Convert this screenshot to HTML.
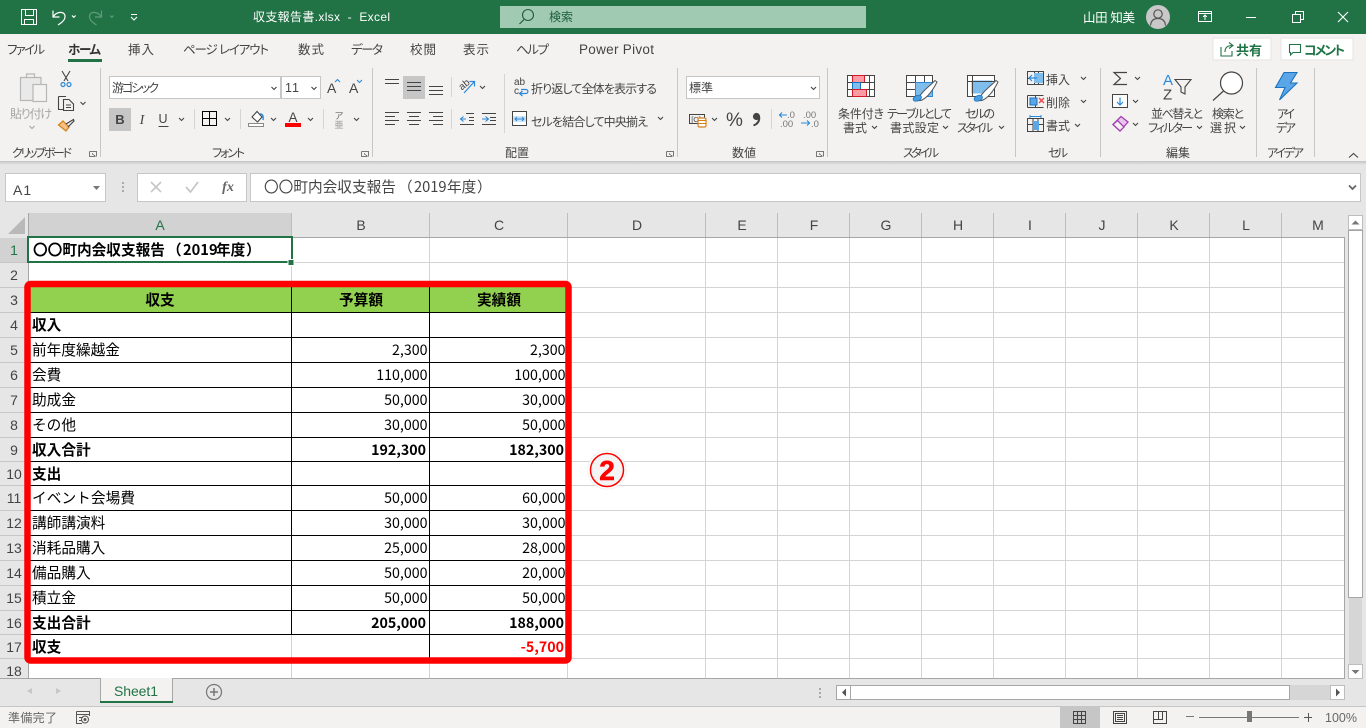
<!DOCTYPE html>
<html lang="ja">
<head>
<meta charset="utf-8">
<title>収支報告書.xlsx - Excel</title>
<style>
html,body{margin:0;padding:0;width:1366px;height:728px;overflow:hidden;background:#e6e6e6}
svg{display:block;position:absolute;left:0;top:0}
text{font-family:"Liberation Sans","Noto Sans CJK JP",sans-serif;white-space:pre;font-feature-settings:"palt"}
.r text{font-size:12px;fill:#444}
.c text{font-family:"Noto Sans CJK JP","Liberation Sans",sans-serif;font-size:14.67px;fill:#000;font-feature-settings:normal}
.c .b{font-weight:700}
.n{font-size:14.2px !important;text-anchor:end}
.h text{font-size:14px;fill:#444;text-anchor:middle}
.cr{shape-rendering:crispEdges}
</style>
</head>
<body>
<svg width="1366" height="728" viewBox="0 0 1366 728" xmlns="http://www.w3.org/2000/svg">
<defs>
<linearGradient id="sh" x1="0" y1="0" x2="0" y2="1"><stop offset="0" stop-color="#c4c4c4"/><stop offset="1" stop-color="#e6e6e6"/></linearGradient>
</defs>

<!-- base regions -->
<rect width="1366" height="728" fill="#e6e6e6"/>
<rect width="1366" height="34" fill="#217346"/>
<rect y="34" width="1366" height="127" fill="#f3f2f1"/>
<rect y="161" width="1366" height="4" fill="url(#sh)"/>

<!-- title bar -->
<g fill="none" stroke="#fff" stroke-width="1.2">
<path class="cr" d="M21.5 9.5H36.5V24.5H21.5ZM25.5 9.5V15.5H33.5V9.5M24.5 24.5V19.5H33.5V24.5"/>
<path d="M53 10.5V17H59.5M53.5 16.5C56 11.5 65 10.5 65 16.5C65 20.5 61 23 58 25"/>
<path d="M72 15.5l1.8 1.8l1.8-1.8"/>
<path d="M131 14.5h6M131 17l3 3l3-3" stroke-width="1.1"/>
</g>
<g fill="none" stroke="#5f9a7c" stroke-width="1.2">
<path d="M101.5 10.5V17H95M101 16.5C98.5 11.5 89.5 10.5 89.5 16.5C89.5 20.5 93.5 23 96.5 25"/>
<path d="M110 15.5l1.8 1.8l1.8-1.8"/>
</g>
<text x="253" y="21" font-size="12" fill="#fff" textLength="137">収支報告書.xlsx  -  Excel</text>
<rect x="500" y="6" width="366" height="22" fill="#a0cbb2"/>
<circle cx="528" cy="15" r="5.5" fill="none" stroke="#1f5c3c" stroke-width="1.1"/>
<path d="M524 19.5L519.5 24" stroke="#1f5c3c" stroke-width="1.2"/>
<text x="549" y="21" font-size="12" fill="#1f5c3c" textLength="24">検索</text>
<text x="1083" y="22" font-size="12.5" fill="#fff" textLength="52">山田 知美</text>
<circle cx="1158" cy="17" r="12" fill="#c8c8c8"/>
<circle cx="1158" cy="14" r="4.2" fill="none" stroke="#555" stroke-width="1.2"/>
<path d="M1150.5 25.5C1151 20 1154 18.5 1158 18.5C1162 18.5 1165 20 1165.5 25.5" fill="none" stroke="#555" stroke-width="1.2"/>
<g fill="none" stroke="#fff" stroke-width="1" class="cr">
<path d="M1198.5 11.5H1211.5V21.5H1198.5ZM1198.5 13.5H1211.5M1205 20V15M1203 17L1205 15L1207 17"/>
<path d="M1246 17.5H1256"/>
<path d="M1292.5 14.5H1300.5V22.5H1292.5ZM1295.5 14.5V11.5H1303.5V19.5H1300.5"/>
</g>
<path d="M1338 12L1348 22M1348 12L1338 22" stroke="#fff" stroke-width="1.1" fill="none"/>

<!-- tabs -->
<g font-size="12.5" fill="#444">
<text x="7" y="54" textLength="38">ファイル</text>
<text x="68" y="54" textLength="33" font-weight="700" style="fill:#333">ホーム</text>
<text x="128" y="54" textLength="26">挿入</text>
<text x="183" y="54" textLength="86">ページ レイアウト</text>
<text x="298" y="54" textLength="26">数式</text>
<text x="351" y="54" textLength="32">データ</text>
<text x="410" y="54" textLength="26">校閲</text>
<text x="463" y="54" textLength="26">表示</text>
<text x="516" y="54" textLength="33">ヘルプ</text>
<text x="579" y="54" font-size="13.5" textLength="75">Power Pivot</text>
</g>
<rect x="68" y="59" width="34" height="3" fill="#217346"/>

<!-- share/comment -->
<rect x="1213" y="38" width="58" height="22" fill="#fff" stroke="#e4e3e2"/>
<rect x="1281" y="38" width="72" height="22" fill="#fff" stroke="#e4e3e2"/>
<path d="M1221 47V56H1232V51M1225 52C1225 47 1228 45.5 1232 45.5M1229 42.5L1233 45.5L1229 48.5" fill="none" stroke="#217346" stroke-width="1.1"/>
<path d="M1289.5 44.5H1300.5V52.5H1293L1290.5 55V52.5H1289.5Z" fill="none" stroke="#217346" stroke-width="1.1"/>
<text x="1236" y="55" font-size="13" font-weight="700" fill="#217346" textLength="26">共有</text>
<text x="1304" y="55" font-size="13" font-weight="700" fill="#217346" textLength="41">コメント</text>

<!-- ribbon separators -->
<path class="cr" d="M100.5 68V157M372.5 68V157M677.5 68V157M827.5 68V157M1015.5 68V157M1100.5 68V157M1256.5 68V157M1314.5 68V157" stroke="#c6c6c6"/>
<path class="cr" d="M451.5 77V97M451.5 109V129M504.5 74V133M194.5 109V129M240.5 109V129M323.5 109V129M771.5 109V129" stroke="#d4d4d4"/>

<!-- group labels & ribbon text -->
<g class="r">
<text x="12" y="157" textLength="60">クリップボード</text>
<text x="212" y="157" textLength="33">フォント</text>
<text x="505" y="157" textLength="24">配置</text>
<text x="732" y="157" textLength="24">数値</text>
<text x="903" y="157" textLength="36">スタイル</text>
<text x="1048" y="157" textLength="20">セル</text>
<text x="1166" y="157" textLength="24">編集</text>
<text x="1267" y="157" textLength="37">アイデア</text>

<text x="10" y="118" textLength="42" style="fill:#a6a6a6">貼り付け</text>
<text x="531" y="93" textLength="126">折り返して全体を表示する</text>
<text x="531" y="126" textLength="117">セルを結合して中央揃え</text>
<text x="838" y="118" textLength="46">条件付き</text>
<text x="843" y="132" textLength="24">書式</text>
<text x="887" y="118" textLength="65">テーブルとして</text>
<text x="890" y="132" textLength="49">書式設定</text>
<text x="965" y="118" textLength="30">セルの</text>
<text x="957" y="132" textLength="36">スタイル</text>
<text x="1046" y="84" textLength="24">挿入</text>
<text x="1046" y="107" textLength="24">削除</text>
<text x="1046" y="130" textLength="24">書式</text>
<text x="1151" y="118" textLength="52">並べ替えと</text>
<text x="1148" y="132" textLength="45">フィルター</text>
<text x="1212" y="118" textLength="32">検索と</text>
<text x="1210" y="132" textLength="26">選択</text>
<text x="1277" y="118" textLength="18">アイ</text>
<text x="1276" y="132" textLength="20">デア</text>
</g>

<!-- chevrons -->
<path fill="none" stroke="#444" stroke-width="1.1" d="M80.5 102l2.5 2.5l2.5-2.5M179 118l2.5 2.5l2.5-2.5M225 118l2.5 2.5l2.5-2.5M271 118l2.5 2.5l2.5-2.5M308 118l2.5 2.5l2.5-2.5M354 118l2.5 2.5l2.5-2.5M480 86l2.5 2.5l2.5-2.5M658 117l2.5 2.5l2.5-2.5M712 118l2.5 2.5l2.5-2.5M872 126l2.5 2.5l2.5-2.5M943 126l2.5 2.5l2.5-2.5M999 126l2.5 2.5l2.5-2.5M1081 77l2.5 2.5l2.5-2.5M1081 100l2.5 2.5l2.5-2.5M1075 124l2.5 2.5l2.5-2.5M1135 77l2.5 2.5l2.5-2.5M1133 100l2.5 2.5l2.5-2.5M1133 123l2.5 2.5l2.5-2.5M1197 126l2.5 2.5l2.5-2.5M1240 126l2.5 2.5l2.5-2.5"/>
<path fill="none" stroke="#a6a6a6" stroke-width="1.1" d="M29.5 126l2.5 2.5l2.5-2.5"/>

<!-- dialog launchers -->
<g fill="none" stroke="#777" stroke-width="1" class="cr">
<path d="M89.5 151.5H96.5V156.5M89.5 151.5V156.5H95M92 153.5L95.5 156.5"/>
<path d="M361.5 151.5H368.5V156.5M361.5 151.5V156.5H367M364 153.5L367.5 156.5"/>
<path d="M666.5 151.5H673.5V156.5M666.5 151.5V156.5H672M669 153.5L672.5 156.5"/>
<path d="M816.5 151.5H823.5V156.5M816.5 151.5V156.5H822M819 153.5L822.5 156.5"/>
</g>
<path d="M1349 157.5l4.5-4l4.5 4" fill="none" stroke="#444" stroke-width="1.1"/>

<!-- clipboard icons -->
<g fill="#e9e9e9" stroke="#b6b6b6" stroke-width="1.2">
<path d="M20.5 77.5H41V100.5H20.5Z"/>
<path d="M26.5 77V74H34.5V77" fill="none"/>
<rect x="33" y="84.5" width="13.5" height="17" fill="#f3f2f1"/>
</g>
<g fill="none" stroke="#444" stroke-width="1.1">
<path d="M62 71L68 81M70 71L64 81"/>
<path d="M58.5 96.5H66M58.5 96.5V109.5H63"/>
<path d="M63.5 99.5H69L73.5 104V110.5H63.5ZM66 105H71M66 107.5H71"/>
</g>
<circle cx="63" cy="84.5" r="2" fill="none" stroke="#2b88d8" stroke-width="1.2"/>
<circle cx="69" cy="84.5" r="2" fill="none" stroke="#2b88d8" stroke-width="1.2"/>
<path d="M58.5 125L66 131L69 127L63 121Z" fill="#f6c180" stroke="#d67f19" stroke-width="1.2"/>
<path d="M66 124L73.5 119.5L74 121L68 127" fill="none" stroke="#444" stroke-width="1.2"/>

<!-- font group -->
<rect class="cr" x="109.5" y="76.5" width="171" height="22" fill="#fff" stroke="#c6c6c6"/>
<rect class="cr" x="281.5" y="76.5" width="39" height="22" fill="#fff" stroke="#c6c6c6"/>
<text x="112" y="92" font-size="12" fill="#444" textLength="47">游ゴシック</text>
<text x="285" y="92" font-size="12.5" fill="#444" textLength="14">11</text>
<path fill="none" stroke="#444" stroke-width="1.1" d="M271.5 87l2.5 2.5l2.5-2.5M311.5 87l2.5 2.5l2.5-2.5"/>
<text x="327" y="93" font-size="14" fill="#444">A</text>
<text x="349" y="93" font-size="14" fill="#444">A</text>
<path d="M335 82l2.5-2.5l2.5 2.5" fill="none" stroke="#2b88d8" stroke-width="1.1"/>
<path d="M357 80l2.5 2.5l2.5-2.5" fill="none" stroke="#2b88d8" stroke-width="1.1"/>
<rect x="109" y="108" width="22" height="23" fill="#c6c6c6"/>
<text x="120" y="124" font-size="13" font-weight="700" fill="#444" text-anchor="middle">B</text>
<text x="142" y="124" font-size="14" font-style="italic" fill="#444" text-anchor="middle" style="font-family:'Liberation Serif',serif">I</text>
<text x="163" y="123" font-size="12.5" fill="#444" text-anchor="middle">U</text>
<path class="cr" d="M158.5 126.5H168.5" stroke="#444"/>
<path class="cr" d="M202.5 111.5H216.5V125.5H202.5ZM209.5 111.5V125.5M202.5 118.5H216.5" fill="none" stroke="#000"/>
<path d="M252 117L257 111.5L262 117L257.5 122Z" fill="#fff" stroke="#444" stroke-width="1.1"/>
<path d="M260 114C263 114 263.5 116 263 120" fill="none" stroke="#2b88d8" stroke-width="1.4"/>
<rect class="cr" x="248.5" y="123.5" width="15" height="3" fill="#fff" stroke="#888"/>
<text x="293" y="122" font-size="13.5" fill="#444" text-anchor="middle">A</text>
<rect x="285" y="123" width="16" height="4" fill="#f00"/>
<text x="339" y="119" font-size="9" fill="#666" text-anchor="middle">ア</text>
<text x="339" y="128" font-size="9" fill="#999" text-anchor="middle">亜</text>

<!-- alignment -->
<rect x="403" y="76" width="22" height="23" fill="#c6c6c6"/>
<path class="cr" fill="none" stroke="#444" d="M385 79.5H399M385 83.5H399M407 82.5H421M407 86.5H421M407 90.5H421M429 86.5H443M429 90.5H443M429 94.5H443
M385 112.5H399M385 116.5H395M385 120.5H399M385 124.5H395M407 112.5H421M409 116.5H419M407 120.5H421M409 124.5H419M429 112.5H443M433 116.5H443M429 120.5H443M433 124.5H443"/>
<text x="461" y="88" font-size="10" fill="#444" transform="rotate(-40 465 88)">ab</text>
<path d="M464 93L474 82M469.5 81.5H474.5V86.5" fill="none" stroke="#2b88d8" stroke-width="1.2"/>
<path class="cr" fill="none" stroke="#444" d="M466 113.5H474M469 117.5H474M469 120.5H474M460 124.5H474M482 113.5H496M490 117.5H496M490 120.5H496M482 124.5H496"/>
<path d="M466 119H461M463.5 116.5L460.5 119L463.5 121.5M482 119H488M485.5 116.5L488.5 119L485.5 121.5" fill="none" stroke="#2b88d8" stroke-width="1.1"/>
<text x="514" y="85" font-size="10" fill="#444">ab</text>
<text x="514" y="94" font-size="10" fill="#444">c</text>
<path d="M521 89.5H526C528.5 89.5 528.5 93.5 526 93.5H520M522.5 91L519.5 93.5L522.5 96" fill="none" stroke="#2b88d8" stroke-width="1.2"/>
<rect class="cr" x="512.5" y="111.5" width="14" height="14" fill="#fff" stroke="#444"/>
<rect x="513" y="116" width="13" height="6" fill="#cfe5f6"/>
<path d="M515 119H524M517 117L515 119L517 121M522 117L524 119L522 121" fill="none" stroke="#2b88d8" stroke-width="1"/>

<!-- number -->
<rect class="cr" x="686.5" y="76.5" width="133" height="22" fill="#fff" stroke="#c6c6c6"/>
<text x="689" y="92" font-size="12" fill="#444" textLength="24">標準</text>
<path fill="none" stroke="#444" stroke-width="1.1" d="M811 87l2.5 2.5l2.5-2.5"/>
<path class="cr" fill="none" stroke="#444" d="M689.5 114.5H704.5V123.5H689.5Z"/>
<text x="696" y="122" font-size="7.5" fill="#444" text-anchor="middle">[C]</text>
<rect x="698" y="118" width="8" height="9" rx="1.5" fill="#fff" stroke="#d67f19" stroke-width="1.2"/>
<path d="M698 120.5H706M698 123.5H706" stroke="#d67f19"/>
<text x="734.5" y="126" font-size="19" fill="#444" text-anchor="middle">%</text>
<circle cx="756.5" cy="116.5" r="3.6" fill="#444"/>
<path d="M759.2 117C759.6 121 757.5 124 753.5 125.5" fill="none" stroke="#444" stroke-width="2"/>
<text x="787" y="118" font-size="9.5" fill="#777">.0</text>
<text x="780" y="127" font-size="9.5" fill="#777">.00</text>
<path d="M787 115H779.5M782 112.5L779.5 115L782 117.5" fill="none" stroke="#2b88d8" stroke-width="1.1"/>
<text x="803" y="118" font-size="9.5" fill="#777">.00</text>
<text x="811" y="127" font-size="9.5" fill="#777">.0</text>
<path d="M801 123H809.5M807 120.5L809.5 123L807 125.5" fill="none" stroke="#2b88d8" stroke-width="1.1"/>

<!-- styles -->
<g class="cr" fill="none" stroke="#444">
<rect x="847.5" y="75.5" width="27" height="21" fill="#fff"/>
<rect x="852.5" y="75.5" width="12" height="7" fill="#ff9ca3" stroke="#d01c24"/>
<rect x="852.5" y="82.5" width="8" height="7" fill="#7fbdec" stroke="#1a73c0"/>
<rect x="852.5" y="89.5" width="14" height="7" fill="#ff9ca3" stroke="#d01c24"/>
<path d="M869.5 75.5V96.5M847.5 82.5H852M847.5 89.5H852M861 82.5H874.5M867 89.5H874.5"/>
<rect x="906.5" y="75.5" width="26" height="21" fill="#fff"/>
<path d="M906.5 82.5H932.5M906.5 89.5H932.5M915.5 75.5V96.5M924.5 75.5V96.5"/>
<rect x="915.5" y="82.5" width="17" height="14" fill="#7fbdec" stroke="#2b88d8"/>
<rect x="967.5" y="75.5" width="27" height="21" fill="#fff"/>
<rect x="972" y="81" width="20" height="12" fill="#7fbdec" stroke="#7fbdec"/>
<path d="M967.5 81.5H994.5M972.5 75.5V96.5"/>
</g>
<path d="M918 99C921 92 930 86 935 80.5L937 82C933 90 928 97 922 100C920 101 918 101 918 99Z" fill="#fff" stroke="#555"/>
<path d="M913 99C914 96 919 94 921 96C923 99 918 102 914 101Z" fill="#4a9ede" stroke="#1a73c0" stroke-width=".8"/>
<path d="M979 99C982 92 991 86 996 80.5L998 82C994 90 989 97 983 100C981 101 979 101 979 99Z" fill="#fff" stroke="#555"/>
<path d="M974 99C975 96 980 94 982 96C984 99 979 102 975 101Z" fill="#4a9ede" stroke="#1a73c0" stroke-width=".8"/>

<!-- cells -->
<g class="cr" fill="none" stroke="#444">
<path d="M1027.5 71.5H1043.5V84.5H1027.5ZM1027.5 78.5H1029M1034.5 71.5V84.5M1038.5 71.5V84.5"/>
<path d="M1027.5 95.5H1043.5M1027.5 107.5H1043.5M1027.5 95.5V107.5M1035.5 95.5V98M1035.5 105V107.5"/>
<rect x="1027.5" y="118.5" width="16" height="13"/>
<path d="M1027.5 124.5H1043.5M1033 118.5V131.5M1038 118.5V131.5"/>
</g>
<rect x="1034" y="73" width="9" height="10" fill="#7fbdec"/>
<path d="M1037 78H1029M1032 75L1029 78L1032 81" fill="none" stroke="#2b88d8" stroke-width="1.2"/>
<rect x="1030" y="98" width="7" height="7" fill="#5ba6e6" stroke="#1a73c0"/>
<path d="M1039 98L1044 103M1044 98L1039 103" stroke="#e8464e" stroke-width="1.4"/>
<rect x="1033" y="121" width="6" height="9" fill="#5ba6e6"/>
<path d="M1030 116.5H1041M1030 115V118M1041 115V118" stroke="#2b88d8"/>

<!-- editing -->
<path d="M1127 72.5H1114L1120.5 78.5L1114 84.5H1127" fill="none" stroke="#444" stroke-width="1.2"/>
<rect class="cr" x="1112.5" y="94.5" width="15" height="13" fill="#fff" stroke="#444"/>
<path d="M1120 97.5V105M1117 102L1120 105L1123 102" fill="none" stroke="#2b88d8" stroke-width="1.2"/>
<path d="M1113 124.5L1121 116.5L1128 122L1120 131Z" fill="#e9c6ee" stroke="#a33fb3" stroke-width="1.3"/>
<path d="M1113 124.5L1117.5 120.5L1124 127L1120 131Z" fill="#f3f2f1" stroke="#a33fb3" stroke-width="1.3"/>
<text x="1163" y="85" font-size="15" fill="#2b88d8">A</text>
<text x="1163" y="99.5" font-size="15" fill="#444">Z</text>
<path d="M1175 79.5H1191L1185 87V94L1181 92V87Z" fill="none" stroke="#444" stroke-width="1.1"/>
<circle cx="1231.5" cy="83" r="11" fill="#fff" stroke="#444" stroke-width="1.2"/>
<path d="M1223.5 91L1213 100.5" stroke="#444" stroke-width="1.2"/>
<path d="M1284 72.5H1297L1290.5 83H1297L1279.5 100L1285 87.5H1275.5Z" fill="#5ba6e6" stroke="#1a73c0" stroke-width="1.1"/>

<!-- formula bar -->
<rect class="cr" x="5.5" y="173.5" width="100" height="28" fill="#fff" stroke="#c6c6c6"/>
<text x="13" y="195" font-size="14" fill="#444" letter-spacing="1">A1</text>
<path d="M93 186H100L96.5 190Z" fill="#777"/>
<path class="cr" d="M122 182h2v2h-2zM122 186h2v2h-2zM122 190h2v2h-2z" fill="#aaa"/>
<rect class="cr" x="137.5" y="173.5" width="109" height="28" fill="#fff" stroke="#c6c6c6"/>
<rect class="cr" x="250.5" y="173.5" width="1110" height="28" fill="#fff" stroke="#c6c6c6"/>
<path d="M151 182L161 192M161 182L151 192" stroke="#c6c6c6" stroke-width="1.6"/>
<path d="M186 187L190.5 192L198 182" fill="none" stroke="#c6c6c6" stroke-width="1.8"/>
<text x="228" y="191" font-size="14" font-style="italic" font-weight="700" fill="#666" text-anchor="middle" style="font-family:'Liberation Serif',serif">fx</text>
<text y="192" font-size="14.67" fill="#444" style='font-family:"Noto Sans CJK JP",sans-serif;font-feature-settings:normal'><tspan x="264">〇〇町内会収支報告</tspan><tspan x="398">（</tspan><tspan x="414">2019</tspan><tspan x="447">年度</tspan><tspan x="477">）</tspan></text>
<path d="M1349 185.5l3.5 3.5l3.5-3.5" fill="none" stroke="#666" stroke-width="1.8"/>

<!-- sheet area -->
<rect x="29" y="238" width="1316" height="440" fill="#fff"/>
<rect x="29" y="213" width="262" height="24" fill="#d2d2d2"/>
<rect x="0" y="238" width="28" height="25" fill="#d2d2d2"/>
<path d="M25 217V234H8Z" fill="#b9b9b9"/>
<!-- gridlines -->
<path class="cr" fill="none" stroke="#d4d4d4" d="M291.5 238V678M429.5 238V678M567.5 238V678M705.5 238V678M777.5 238V678M849.5 238V678M921.5 238V678M993.5 238V678M1065.5 238V678M1137.5 238V678M1209.5 238V678M1281.5 238V678
M29 262.5H1345M29 287.5H1345M29 312.5H1345M29 337.5H1345M29 362.5H1345M29 387.5H1345M29 412.5H1345M29 437.5H1345M29 461.5H1345M29 485.5H1345M29 510.5H1345M29 535.5H1345M29 560.5H1345M29 585.5H1345M29 610.5H1345M29 634.5H1345M29 658.5H1345"/>
<!-- header lines -->
<path class="cr" fill="none" stroke="#bdbdbd" d="M291.5 213V237M429.5 213V237M567.5 213V237M705.5 213V237M777.5 213V237M849.5 213V237M921.5 213V237M993.5 213V237M1065.5 213V237M1137.5 213V237M1209.5 213V237M1281.5 213V237"/>
<path class="cr" fill="none" stroke="#c6c6c6" d="M0 262.5H28M0 287.5H28M0 312.5H28M0 337.5H28M0 362.5H28M0 387.5H28M0 412.5H28M0 437.5H28M0 461.5H28M0 485.5H28M0 510.5H28M0 535.5H28M0 560.5H28M0 585.5H28M0 610.5H28M0 634.5H28M0 658.5H28"/>
<path class="cr" fill="none" stroke="#a6a6a6" d="M29 237.5H1345M28.5 213V678M1344.5 237V678M0 678.5H1345"/>

<g class="h">
<text x="160" y="230" style="fill:#217346">A</text><text x="361" y="230">B</text><text x="499" y="230">C</text><text x="637" y="230">D</text><text x="742" y="230">E</text><text x="814" y="230">F</text><text x="886" y="230">G</text><text x="958" y="230">H</text><text x="1030" y="230">I</text><text x="1102" y="230">J</text><text x="1174" y="230">K</text><text x="1246" y="230">L</text><text x="1318" y="230">M</text>
<text x="14" y="255" style="fill:#217346">1</text><text x="14" y="280">2</text><text x="14" y="305">3</text><text x="14" y="330">4</text><text x="14" y="355">5</text><text x="14" y="380">6</text><text x="14" y="405">7</text><text x="14" y="430">8</text><text x="14" y="455">9</text><text x="14" y="479">10</text><text x="14" y="503">11</text><text x="14" y="528">12</text><text x="14" y="553">13</text><text x="14" y="578">14</text><text x="14" y="603">15</text><text x="14" y="628">16</text><text x="14" y="652">17</text><text x="14" y="676">18</text>
</g>

<!-- table -->
<rect x="29" y="287" width="538" height="25" fill="#92d050"/>
<path class="cr" fill="none" stroke="#000" d="M29 312.5H567M29 337.5H567M29 362.5H567M29 387.5H567M29 412.5H567M29 437.5H567M29 461.5H567M29 485.5H567M29 510.5H567M29 535.5H567M29 560.5H567M29 585.5H567M29 610.5H567M29 634.5H567M291.5 287V634M429.5 287V658"/>

<g class="c">
<text y="255" class="b"><tspan x="33">〇〇町内会収支報告</tspan><tspan x="167">（</tspan><tspan x="183">2019</tspan><tspan x="216">年度</tspan><tspan x="246">）</tspan></text>
<text x="160" y="305" class="b" text-anchor="middle">収支</text>
<text x="361" y="305" class="b" text-anchor="middle">予算額</text>
<text x="499" y="305" class="b" text-anchor="middle">実績額</text>
<text x="32" y="330" class="b">収入</text>
<text x="32" y="355">前年度繰越金</text>
<text x="32" y="380">会費</text>
<text x="32" y="405">助成金</text>
<text x="32" y="430">その他</text>
<text x="32" y="455" class="b">収入合計</text>
<text x="32" y="479" class="b">支出</text>
<text x="32" y="503" textLength="103">イベント会場費</text>
<text x="32" y="528">講師講演料</text>
<text x="32" y="553">消耗品購入</text>
<text x="32" y="578">備品購入</text>
<text x="32" y="603">積立金</text>
<text x="32" y="628" class="b">支出合計</text>
<text x="32" y="652" class="b">収支</text>

<text class="n" x="427.5" y="355">2,300</text><text class="n" x="565.5" y="355">2,300</text>
<text class="n" x="427.5" y="380">110,000</text><text class="n" x="565.5" y="380">100,000</text>
<text class="n" x="427.5" y="405">50,000</text><text class="n" x="565.5" y="405">30,000</text>
<text class="n" x="427.5" y="430">30,000</text><text class="n" x="565.5" y="430">50,000</text>
<text class="n b" x="426" y="455">192,300</text><text class="n b" x="564" y="455">182,300</text>
<text class="n" x="427.5" y="503">50,000</text><text class="n" x="565.5" y="503">60,000</text>
<text class="n" x="427.5" y="528">30,000</text><text class="n" x="565.5" y="528">30,000</text>
<text class="n" x="427.5" y="553">25,000</text><text class="n" x="565.5" y="553">28,000</text>
<text class="n" x="427.5" y="578">50,000</text><text class="n" x="565.5" y="578">20,000</text>
<text class="n" x="427.5" y="603">50,000</text><text class="n" x="565.5" y="603">50,000</text>
<text class="n b" x="426" y="628">205,000</text><text class="n b" x="564" y="628">188,000</text>
<text class="n b" x="564" y="652" style="fill:#f00">-5,700</text>
</g>

<!-- selection -->
<rect class="cr" x="28" y="237" width="264" height="25" fill="none" stroke="#217346" stroke-width="2"/>
<rect x="288" y="259.5" width="6" height="6" fill="#217346" stroke="#fff" stroke-width="1"/>

<!-- red frame -->
<rect x="27.5" y="284" width="541" height="376.5" rx="3" fill="none" stroke="#f00" stroke-width="6.5"/>

<!-- circled number -->
<circle cx="607" cy="470" r="20" fill="#eee" opacity=".6"/>
<circle cx="607" cy="470" r="18.5" fill="#fff"/>
<circle cx="607" cy="470" r="16.5" fill="#f4f4f4" stroke="#f00" stroke-width="1.5"/>
<text x="607" y="480" font-size="28" font-weight="700" fill="#f00" stroke="#f00" stroke-width=".6" text-anchor="middle">2</text>

<!-- vertical scrollbar -->
<rect x="1345" y="213" width="21" height="466" fill="#e6e6e6"/>
<rect x="1349" y="598" width="13" height="66" fill="#d6d6d6"/>
<rect class="cr" x="1348.5" y="215.5" width="14" height="14" fill="#fff" stroke="#bdbdbd"/>
<path d="M1351.5 224.5H1359.5L1355.5 220.5Z" fill="#777"/>
<rect class="cr" x="1348.5" y="230.5" width="14" height="367" fill="#fff" stroke="#a6a6a6"/>
<rect class="cr" x="1348.5" y="664.5" width="14" height="14" fill="#fff" stroke="#bdbdbd"/>
<path d="M1351.5 670H1359.5L1355.5 674Z" fill="#777"/>

<!-- sheet tabs -->
<path d="M32 688V694L27 691Z" fill="#c6c6c6"/>
<path d="M56 688V694L61 691Z" fill="#c6c6c6"/>
<path class="cr" d="M100.5 678.5V703M172.5 678.5V703" stroke="#a6a6a6" fill="none"/>
<rect x="101" y="678" width="71" height="23" fill="#f3f2f1"/>
<rect x="100" y="701" width="73" height="2" fill="#217346"/>
<text x="114" y="696" font-size="14" fill="#217346" textLength="44">Sheet1</text>
<circle cx="214" cy="692" r="7.5" fill="none" stroke="#777" stroke-width="1.2"/>
<path d="M210 692H218M214 688V696" stroke="#777" stroke-width="1.5"/>
<path class="cr" d="M819 688h2v2h-2zM819 692h2v2h-2zM819 696h2v2h-2z" fill="#aaa"/>

<!-- horizontal scrollbar -->
<rect x="850" y="685" width="480" height="15" fill="#d6d6d6"/>
<rect class="cr" x="836.5" y="685.5" width="14" height="14" fill="#fff" stroke="#a6a6a6"/>
<path d="M846 688.5V696.5L842 692.5Z" fill="#555"/>
<rect class="cr" x="850.5" y="685.5" width="439" height="14" fill="#fff" stroke="#a6a6a6"/>
<rect class="cr" x="1330.5" y="685.5" width="14" height="14" fill="#fff" stroke="#bdbdbd"/>
<path d="M1336 688.5V696.5L1340 692.5Z" fill="#555"/>

<!-- status bar -->
<rect x="0" y="706" width="1366" height="22" fill="#f3f2f1"/>
<path class="cr" d="M0 706.5H1366" stroke="#c6c6c6"/>
<text x="8" y="722" font-size="12" fill="#666" textLength="49">準備完了</text>
<path class="cr" fill="none" stroke="#555" d="M76.5 711.5H89.5V716M76.5 711.5V723.5H82M76.5 714.5H89.5M79 717.5H83M79 720.5H82"/>
<circle cx="85" cy="719.5" r="3.5" fill="none" stroke="#555"/><circle cx="85" cy="719.5" r="1.5" fill="#555"/>
<rect x="1060" y="707" width="40" height="21" fill="#c6c6c6"/>
<path class="cr" fill="none" stroke="#444" d="M1073.5 711.5H1085.5V723.5H1073.5ZM1077.5 711.5V723.5M1081.5 711.5V723.5M1073.5 715.5H1085.5M1073.5 719.5H1085.5"/>
<path class="cr" fill="none" stroke="#444" d="M1113.5 711.5H1126.5V723.5H1113.5ZM1115.5 713.5H1124.5V721.5H1115.5ZM1117 715.5H1123M1117 717.5H1123M1117 719.5H1123"/>
<path class="cr" fill="none" stroke="#444" d="M1153.5 711.5H1166.5V723.5H1153.5ZM1153.5 719.5H1162.5V711.5M1158.5 711.5V719.5"/>
<path class="cr" d="M1186 716.5H1194M1199 717.5H1299" stroke="#777" fill="none"/>
<path class="cr" d="M1304 717.5H1312M1308.5 713V722" stroke="#555" fill="none"/>
<rect x="1247" y="711" width="5" height="11" fill="#777"/>
<text x="1325" y="722" font-size="12.5" fill="#666" textLength="32">100%</text>
</svg>
</body>
</html>
